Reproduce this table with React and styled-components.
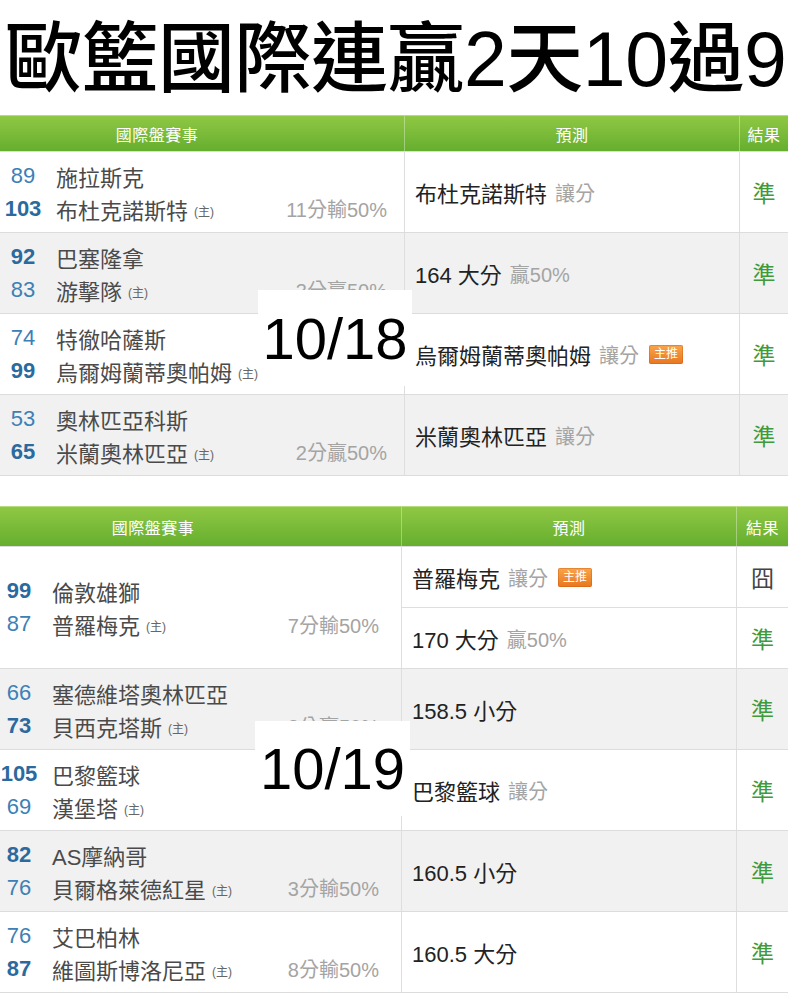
import React from 'react'
import styled, { createGlobalStyle } from 'styled-components'

const Global = createGlobalStyle`
  body {
    margin: 0;
    background: #fff;
    font-family: "Liberation Sans", "Noto Sans CJK TC", sans-serif;
  }
`

const Page = styled.div`
  width: 788px;
  overflow: hidden;
`

const Title = styled.h1`
  margin: 0;
  height: 115px;
  line-height: 118px;
  padding-left: 5px;
  font-family: "Liberation Sans", "Noto Sans CJK TC", sans-serif;
  font-size: 77px;
  font-weight: 500;
  color: #000;
  white-space: nowrap;
  letter-spacing: -0.5px;
`

const Table = styled.div`
  position: relative;
  margin-bottom: ${p => p.$gap || 0}px;
  border-bottom: 1px solid #dcdcdc;
`

const Header = styled.div`
  display: grid;
  grid-template-columns: ${p => p.$left}px ${p => p.$mid}px 1fr;
  height: ${p => p.$h}px;
  background: linear-gradient(#8fc843, #66ae2f);
  border-top: 1px solid #b5dc7e;
  box-sizing: border-box;
  color: #fff;
  font-size: 16px;
`

const HeadCell = styled.div`
  display: flex;
  align-items: center;
  justify-content: center;
  padding-right: ${p => p.$shift || 0}px;
  border-right: ${p => (p.$last ? 'none' : '1px solid rgba(255,255,255,0.35)')};
  letter-spacing: 0.5px;
`

const Row = styled.div`
  display: grid;
  grid-template-columns: ${p => p.$left}px 1fr;
  height: ${p => p.$h}px;
  background: ${p => (p.$alt ? '#f1f1f1' : '#fff')};
  border-top: 1px solid #dcdcdc;
  box-sizing: border-box;
`

const Match = styled.div`
  display: flex;
  flex-direction: column;
  justify-content: center;
  border-right: 1px solid #dedede;
  padding-right: ${p => p.$pr}px;
`

const Line = styled.div`
  display: flex;
  align-items: center;
  height: 33px;
`

const Score = styled.span`
  width: ${p => p.$w}px;
  text-align: center;
  flex-shrink: 0;
  font-size: 22px;
  font-weight: ${p => (p.$win ? 700 : 400)};
  color: ${p => (p.$win ? '#2b6a9e' : '#3d80b5')};
`

const Team = styled.span`
  margin-left: ${p => p.$ml}px;
  font-size: 22px;
  color: #4a4a4a;
  white-space: nowrap;
`

const Home = styled.span`
  font-size: 12px;
  color: #666;
  margin-left: 6px;
  vertical-align: 3px;
`

const Spread = styled.span`
  margin-left: auto;
  font-size: 20px;
  color: #a4a4a4;
  white-space: nowrap;
`

const Picks = styled.div`
  display: flex;
  flex-direction: column;
`

const PickLine = styled.div`
  flex: 1;
  display: grid;
  grid-template-columns: ${p => p.$mid}px 1fr;
  border-top: ${p => (p.$first ? 'none' : '1px solid #dedede')};
`

const Pick = styled.div`
  display: flex;
  align-items: center;
  padding-left: 10px;
  border-right: 1px solid #dedede;
  font-size: 22px;
  color: #222;
  white-space: nowrap;
`

const Sub = styled.span`
  margin-left: 8px;
  font-size: 20px;
  color: #a4a4a4;
`

const Badge = styled.span`
  margin-left: 10px;
  padding: 0 5px;
  height: 19px;
  line-height: 19px;
  font-size: 12px;
  color: #fff;
  border-radius: 2px;
  background: linear-gradient(#f9a54a, #e8761f);
  box-shadow: inset 0 0 0 1px rgba(200, 90, 20, 0.4);
`

const Result = styled.div`
  display: flex;
  align-items: center;
  justify-content: center;
  font-size: 23px;
  color: ${p => (p.$bad ? '#444' : '#3f9a3a')};
`

const DateTag = styled.div`
  position: absolute;
  left: ${p => p.$x}px;
  top: ${p => p.$y}px;
  width: ${p => p.$w}px;
  height: ${p => p.$h}px;
  background: #fff;
  display: flex;
  align-items: center;
  justify-content: center;
  font-family: "Liberation Sans", sans-serif;
  font-size: 58px;
  color: #000;
`

const day1 = [
  { a: ['89', '施拉斯克'], b: ['103', '布杜克諾斯特'], win: 'b', spread: '11分輸50%',
    picks: [{ main: '布杜克諾斯特', sub: '讓分', res: '準' }] },
  { a: ['92', '巴塞隆拿'], b: ['83', '游擊隊'], win: 'a', spread: '3分贏50%',
    picks: [{ main: '164 大分', sub: '贏50%', res: '準' }] },
  { a: ['74', '特徹哈薩斯'], b: ['99', '烏爾姆蘭蒂奧帕姆'], win: 'b', spread: '',
    picks: [{ main: '烏爾姆蘭蒂奧帕姆', sub: '讓分', badge: true, res: '準' }] },
  { a: ['53', '奧林匹亞科斯'], b: ['65', '米蘭奧林匹亞'], win: 'b', spread: '2分贏50%',
    picks: [{ main: '米蘭奧林匹亞', sub: '讓分', res: '準' }] },
]

const day2 = [
  { a: ['99', '倫敦雄獅'], b: ['87', '普羅梅克'], win: 'a', spread: '7分輸50%', h: 122,
    picks: [
      { main: '普羅梅克', sub: '讓分', badge: true, res: '囧', bad: true },
      { main: '170 大分', sub: '贏50%', res: '準' },
    ] },
  { a: ['66', '塞德維塔奧林匹亞'], b: ['73', '貝西克塔斯'], win: 'b', spread: '3分贏50%',
    picks: [{ main: '158.5 小分', res: '準' }] },
  { a: ['105', '巴黎籃球'], b: ['69', '漢堡塔'], win: 'a', spread: '',
    picks: [{ main: '巴黎籃球', sub: '讓分', res: '準' }] },
  { a: ['82', 'AS摩納哥'], b: ['76', '貝爾格萊德紅星'], win: 'a', spread: '3分輸50%',
    picks: [{ main: '160.5 小分', res: '準' }] },
  { a: ['76', '艾巴柏林'], b: ['87', '維圖斯博洛尼亞'], win: 'b', spread: '8分輸50%',
    picks: [{ main: '160.5 大分', res: '準' }] },
]

function GameTable({ games, cfg, date }) {
  return (
    <Table $gap={cfg.gap}>
      <Header $left={cfg.left} $mid={cfg.mid} $h={cfg.headH}>
        <HeadCell $shift={cfg.shift}>國際盤賽事</HeadCell>
        <HeadCell>預測</HeadCell>
        <HeadCell $last>結果</HeadCell>
      </Header>
      {games.map((g, i) => (
        <Row key={i} $left={cfg.left} $h={g.h || 81} $alt={i % 2 === 1}>
          <Match $pr={cfg.pr}>
            <Line>
              <Score $w={cfg.sw} $win={g.win === 'a'}>{g.a[0]}</Score>
              <Team $ml={cfg.ml}>{g.a[1]}</Team>
            </Line>
            <Line>
              <Score $w={cfg.sw} $win={g.win === 'b'}>{g.b[0]}</Score>
              <Team $ml={cfg.ml}>{g.b[1]}<Home>(主)</Home></Team>
              <Spread>{g.spread}</Spread>
            </Line>
          </Match>
          <Picks>
            {g.picks.map((p, j) => (
              <PickLine key={j} $mid={cfg.mid} $first={j === 0}>
                <Pick>
                  {p.main}
                  {p.sub && <Sub>{p.sub}</Sub>}
                  {p.badge && <Badge>主推</Badge>}
                </Pick>
                <Result $bad={p.bad}>{p.res}</Result>
              </PickLine>
            ))}
          </Picks>
        </Row>
      ))}
      <DateTag $x={date.x} $y={date.y} $w={date.w} $h={date.h}>{date.text}</DateTag>
    </Table>
  )
}

export default function App() {
  return (
    <Page>
      <Global />
      <Title>歐籃國際連贏2天10過9</Title>
      <GameTable
        games={day1}
        cfg={{ left: 405, mid: 335, headH: 36, shift: 90, sw: 46, ml: 10, pr: 17, gap: 30 }}
        date={{ text: '10/18', x: 258, y: 175, w: 154, h: 96 }}
      />
      <GameTable
        games={day2}
        cfg={{ left: 402, mid: 335, headH: 40, shift: 95, sw: 38, ml: 14, pr: 22, gap: 0 }}
        date={{ text: '10/19', x: 255, y: 215, w: 155, h: 95 }}
      />
    </Page>
  )
}
